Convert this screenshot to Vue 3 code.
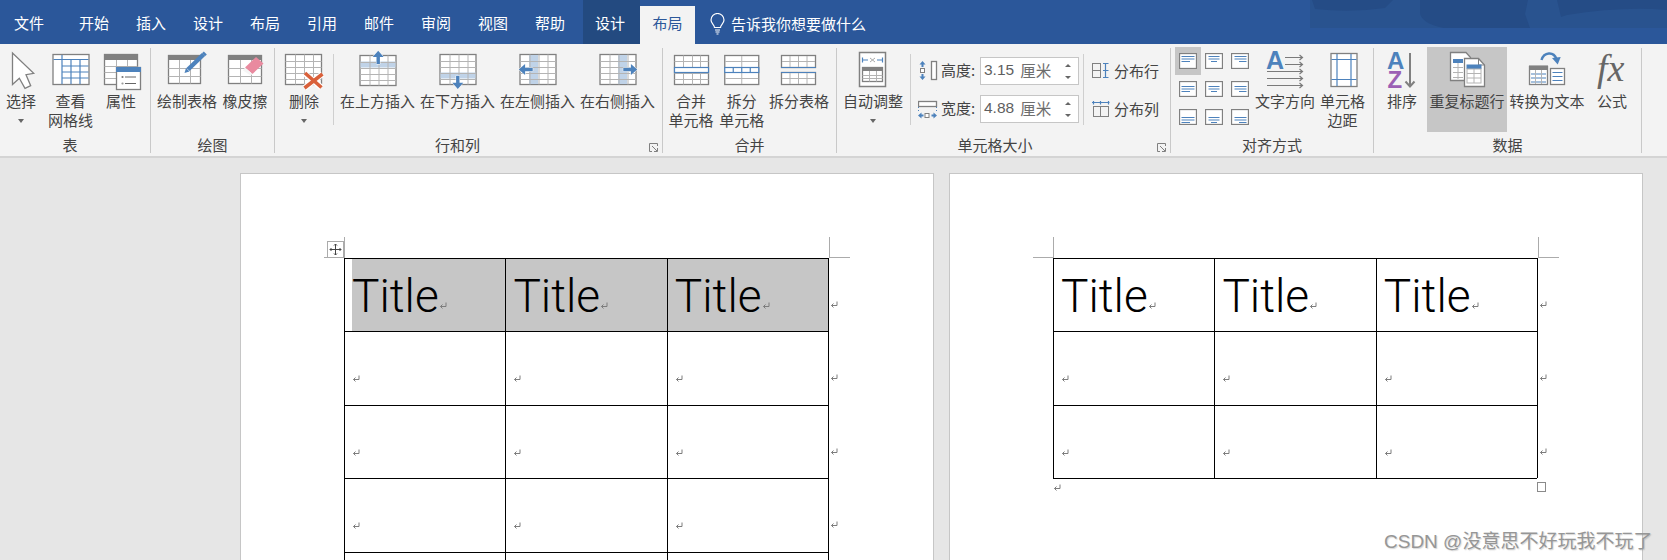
<template>
  <div class="word">
    <header class="titlebar">
      <svg class="clouds" viewBox="1310 0 357 28" width="357" height="28">
        <rect x="1310" y="0" width="357" height="28" fill="#29538f" />
        <path d="M1312 0h81l-8 8q-35 5-70 1z" fill="#254c86" />
        <path d="M1420 0h108l-3 14 5 14h-86q-24-5-24-16z" fill="#254c86" />
        <path d="M1557 0h110v10q-45-4-100 5l-6 2z" fill="#254c86" />
      </svg>
      <div class="tab file">文件</div>
      <div v-for="t in tabs" :key="t" class="tab">{{ t }}</div>
      <div class="tab context">设计</div>
      <div class="tab active">布局</div>
      <div class="tell">
        <svg width="15" height="22" viewBox="0 0 15 22" fill="none" stroke="#fff" stroke-width="1.2">
          <path d="M4.5 14.5c0-2.5-3.5-4-3.5-7.5a6.5 6.5 0 0 1 13 0c0 3.500-3.500 5-3.500 7.500z" />
          <path d="M5 17h5M5.500 19h4M6.500 21h2" />
        </svg>
        <span>告诉我你想要做什么</span>
      </div>
    </header>

    <nav class="ribbon">
      <section class="group" style="width: 151px">
        <div class="body">
          <div class="btn" style="width: 42px">
            <svg class="ico" viewBox="1 47 40 46">
              <path class="o" d="M12.500 53V84.500L19.300 78.300 25 88.300 30.700 85.700 26 74.700 33.700 73.300z" />
            </svg>
            <span>选择</span><i class="caret"></i>
          </div>
          <div class="btn" style="width: 57px">
            <svg class="ico" viewBox="50.500 47 40 46">
              <rect class="o" x="52.500" y="54.500" width="36" height="30" />
              <path class="b" d="M53 59.500H88M61.500 55V84M70.500 60V84M79.500 60V84M62 66H88M62 72H88M62 78H88" />
            </svg>
            <span>查看</span><span>网格线</span>
          </div>
          <div class="btn" style="width: 44px">
            <svg class="ico" viewBox="101 47 40 46">
              <rect class="o" x="104.500" y="54.500" width="33" height="30" />
              <path class="g" :d="grid(104.500, 60, 33, 24.500, 3, 4)" />
              <rect x="104" y="54" width="34" height="6" fill="#808080" />
              <rect class="o" x="116.500" y="67.500" width="24" height="22" />
              <rect x="116" y="67" width="25" height="5" fill="#4d82bc" />
              <path d="M125 77H136M125 83.500H136" stroke="#666" fill="none" />
              <circle cx="122.500" cy="77" r="1.100" fill="#777" /><circle cx="122.500" cy="83.500" r="1.100" fill="#999" />
            </svg>
            <span>属性</span>
          </div>
        </div>
        <h4 style="padding-right: 10px">表</h4>
      </section>

      <section class="group" style="width: 124px">
        <div class="body">
          <div class="btn" style="width: 72px">
            <svg class="ico" viewBox="167 47 40 46">
              <rect class="o" x="168.500" y="55.500" width="32" height="28" />
              <path class="g" :d="grid(168.500, 60, 32, 23.500, 3, 3)" />
              <rect x="168" y="55" width="33" height="5" fill="#808080" />
              <path d="M188 69.500L203.500 54.500" stroke="#4d82bc" stroke-width="4.500" fill="none" />
              <path d="M184.500 73l1.500-5 3.500 3.500z" fill="#4d82bc" />
              <path d="M203.800 51.500l3 3-1.800 1.800-3-3z" fill="#4d82bc" />
            </svg>
            <span>绘制表格</span>
          </div>
          <div class="btn" style="width: 44px">
            <svg class="ico" viewBox="225 47 40 46">
              <rect class="o" x="228.500" y="55.500" width="33" height="28" />
              <path class="g" :d="grid(228.500, 60, 33, 23.500, 3, 3)" />
              <rect x="228" y="55" width="34" height="5" fill="#808080" />
              <path d="M245 67.500L256 57l7.500 6.500-11 10.500z" fill="#e98a9f" />
              <path d="M245 67.500l7.500 6.500-2 1.500-7.500-5z" fill="#f5f5f5" />
            </svg>
            <span>橡皮擦</span>
          </div>
        </div>
        <h4>绘图</h4>
      </section>

      <section class="group" style="width: 388px">
        <div class="body">
          <div class="btn" style="width: 58px">
            <svg class="ico" viewBox="284 47 40 46">
              <rect class="o" x="285.500" y="54.500" width="36" height="30" />
              <path class="g" :d="grid(285.500, 54.500, 36, 30, 4, 5)" />
              <path d="M305 73.500L321.500 87.500M304.500 88L322.500 74" stroke="#fff" stroke-width="6" fill="none" />
              <path d="M305 73L321.500 87.500M304.500 88L322.500 74" stroke="#d9603a" stroke-width="3.600" fill="none" />
            </svg>
            <span>删除</span><i class="caret"></i>
          </div>
          <i class="vsep"></i>
          <div class="btn wide" style="margin-left: 3.500px">
            <svg class="ico" viewBox="357.500 47 40 46">
              <rect class="o" x="359.500" y="55.500" width="36" height="30" />
              <rect x="360" y="61.500" width="35" height="6" fill="#c0d3e8" />
              <path class="g" :d="grid(359.500, 55.500, 36, 30, 4, 5)" />
              <path class="arrow" d="M377.700 50.700l5.500 6.300h-3.800v7h-3.400v-7H372.200z" />
            </svg>
            <span>在上方插入</span>
          </div>
          <div class="btn wide">
            <svg class="ico" viewBox="437.500 47 40 46">
              <rect class="o" x="439.500" y="54.500" width="36" height="30" />
              <rect x="440" y="72.500" width="35" height="6" fill="#c0d3e8" />
              <path class="g" :d="grid(439.500, 54.500, 36, 30, 4, 5)" />
              <path class="arrow" d="M457.300 89l-5.500-6.300h3.800v-7h3.400v7h3.800z" />
            </svg>
            <span>在下方插入</span>
          </div>
          <div class="btn wide">
            <svg class="ico" viewBox="517.500 47 40 46">
              <rect class="o" x="519.500" y="54.500" width="36" height="30" />
              <rect x="528.500" y="55" width="9" height="29" fill="#c0d3e8" />
              <path class="g" :d="grid(519.500, 54.500, 36, 30, 4, 5)" />
              <path class="arrow" d="M518.300 69.500l6.300-5.500v3.800h7.600v3.400h-7.600v3.800z" />
            </svg>
            <span>在左侧插入</span>
          </div>
          <div class="btn wide">
            <svg class="ico" viewBox="597.500 47 40 46">
              <rect class="o" x="599.500" y="54.500" width="36" height="30" />
              <rect x="617.500" y="55" width="9" height="29" fill="#c0d3e8" />
              <path class="g" :d="grid(599.500, 54.500, 36, 30, 4, 5)" />
              <path class="arrow" d="M636.700 69.500l-6.300-5.500v3.800h-7.600v3.400h7.600v3.800z" />
            </svg>
            <span>在右侧插入</span>
          </div>
        </div>
        <h4 style="padding-right: 22px">行和列</h4>
        <svg class="launcher" width="9" height="9" viewBox="0 0 9 9" fill="none" stroke="#808080">
          <path d="M8.500 3V.5H.5v8H3M3 3l5 5M8.500 5v3.500H5" />
        </svg>
      </section>

      <section class="group" style="width: 174px">
        <div class="body">
          <div class="btn" style="width: 56px">
            <svg class="ico" viewBox="671 47 40 46">
              <rect class="o" x="674.500" y="55.500" width="34" height="29" />
              <path class="g" :d="grid(674.500, 55.500, 34, 29, 4, 5)" />
              <rect x="674.500" y="67.500" width="34" height="5" fill="#fff" stroke="#4d82bc" stroke-width="1.200" />
            </svg>
            <span>合并</span><span>单元格</span>
          </div>
          <div class="btn" style="width: 45.500px">
            <svg class="ico" viewBox="721.750 47 40 46">
              <rect class="o" x="724.500" y="55.500" width="34" height="29" />
              <path class="g" d="M741.500 56V67M741.500 73V84M725 61.500H758M725 78.500H758" />
              <rect x="724.500" y="67.500" width="34" height="5" fill="#fff" stroke="#4d82bc" stroke-width="1.200" />
              <path class="b" d="M733 68V72M741.500 68V72M750 68V72" />
            </svg>
            <span>拆分</span><span>单元格</span>
          </div>
          <div class="btn" style="width: 69px">
            <svg class="ico" viewBox="779 47 40 46">
              <rect class="o" x="781.500" y="55.500" width="34" height="12" />
              <rect class="o" x="781.500" y="72.500" width="34" height="12" />
              <path class="g" d="M790 56V67M798.500 56V67M807 56V67M782 61.500H815M790 73V84M798.500 73V84M807 73V84M782 78.500H815" />
              <path class="b" d="M781 67.500H816M781 72.500H816" />
            </svg>
            <span>拆分表格</span>
          </div>
        </div>
        <h4>合并</h4>
      </section>

      <section class="group" style="width: 334px">
        <div class="body">
          <div class="btn" style="width: 72px">
            <svg class="ico" viewBox="853 47 40 46">
              <rect x="859.500" y="52.500" width="26" height="34" fill="#fff" stroke="#808080" stroke-width="1.500" />
              <path class="b" d="M862.500 57.500V62.500M882.500 57.500V62.500M863 60H868M877 60H882" />
              <path d="M870 58l5 4M875 58l-5 4" stroke="#aaa" fill="none" />
              <rect class="o" x="862.500" y="67.500" width="20" height="14" />
              <path class="g" :d="grid(862.500, 71, 20, 10.500, 3, 3)" />
              <rect x="862" y="67" width="21" height="4" fill="#808080" />
            </svg>
            <span>自动调整</span><i class="caret"></i>
          </div>
          <i class="vsep" style="margin-left: 1px"></i>
          <div class="sizes">
            <div class="size-row">
              <svg width="20" height="22" viewBox="918 60 20 22">
                <rect class="o" x="931.500" y="61.500" width="5" height="18" />
                <rect x="920.500" y="68.500" width="4" height="4" fill="#fff" stroke="#808080" />
                <path d="M922.500 61l-3 3.500h2V67h2v-2.500h2zM922.500 80l-3-3.500h2V74h2v2.500h2z" fill="#4d82bc" />
              </svg>
              <label>高度:</label>
              <div class="spin">
                <span>3.15</span><em>厘米</em>
                <div class="spin-btns"><i class="up"></i><i class="down"></i></div>
              </div>
            </div>
            <div class="size-row">
              <svg width="20" height="22" viewBox="918 97 20 22">
                <rect class="o" x="918.500" y="100.500" width="18" height="5" />
                <path d="M918.500 106V112M936.500 106V112" stroke="#4d82bc" stroke-dasharray="1 2" fill="none" />
                <rect x="925" y="112.500" width="4" height="4" fill="#fff" stroke="#808080" />
                <path d="M918 114.500l3.500-3v2h2v2h-2v2zM937 114.500l-3.500-3v2h-2v2h2v2z" fill="#4d82bc" />
              </svg>
              <label>宽度:</label>
              <div class="spin">
                <span>4.88</span><em>厘米</em>
                <div class="spin-btns"><i class="up"></i><i class="down"></i></div>
              </div>
            </div>
          </div>
          <i class="vsep"></i>
          <div class="dist">
            <div class="dist-row">
              <svg width="18" height="18" viewBox="1092 62 18 18">
                <rect x="1092.500" y="63.500" width="8" height="14" fill="none" stroke="#808080" />
                <path d="M1092.500 70.500H1100.500" stroke="#808080" />
                <path class="b" d="M1105.500 63.500V77.500M1103 63.500H1108.500M1103 70.500H1108.500M1103 77.500H1108.500" />
              </svg>
              <span>分布行</span>
            </div>
            <div class="dist-row">
              <svg width="18" height="18" viewBox="1092 99 18 18">
                <rect x="1093.500" y="105.500" width="15" height="10" fill="none" stroke="#808080" />
                <path d="M1100.500 105.500V115.500" stroke="#808080" />
                <path class="b" d="M1092 101.500H1109.500M1093.500 100V103.500M1100.500 100V103.500M1108.500 100V103.500" />
              </svg>
              <span>分布列</span>
            </div>
          </div>
        </div>
        <h4 style="padding-right: 17px">单元格大小</h4>
        <svg class="launcher" width="9" height="9" viewBox="0 0 9 9" fill="none" stroke="#808080">
          <path d="M8.500 3V.5H.5v8H3M3 3l5 5M8.500 5v3.500H5" />
        </svg>
      </section>

      <section class="group" style="width: 203px">
        <div class="body">
          <div class="aligns">
            <div v-for="(a, i) in aligns" :key="i" class="align" :class="{ on: i === 0 }">
              <svg width="18" height="16" viewBox="0 0 18 16">
                <rect class="o" x=".5" y=".5" width="17" height="15" />
                <path class="b" :d="a" />
              </svg>
            </div>
          </div>
          <div class="btn" style="width: 64px">
            <svg class="ico" viewBox="1265 47 40 46">
              <text x="1266" y="69" class="letter" fill="#4d82bc">A</text>
              <path class="ar" d="M1285 57.500H1302M1285 64.500H1302M1267 71.500H1302M1267 78.500H1302M1267 85.500H1302" />
              <path class="ar" d="M1299.500 55l3 2.500-3 2.500M1299.500 62l3 2.500-3 2.500M1299.500 69l3 2.500-3 2.500M1299.500 76l3 2.500-3 2.500M1299.500 83l3 2.500-3 2.500" />
            </svg>
            <span>文字方向</span>
          </div>
          <div class="btn" style="width: 51px">
            <svg class="ico" viewBox="1322.500 47 40 46">
              <rect class="o" x="1330.500" y="53.500" width="26" height="33" />
              <path class="b" d="M1336.500 54V86M1350.500 54V86M1331 59.500H1356M1331 79.500H1356" />
            </svg>
            <span>单元格</span><span>边距</span>
          </div>
        </div>
        <h4>对齐方式</h4>
      </section>

      <section class="group" style="width: 268px">
        <div class="body">
          <div class="btn" style="width: 50px; margin-left: 3px">
            <svg class="ico" viewBox="1382 47 40 46">
              <text x="1387" y="69" class="letter small" fill="#4d82bc">A</text>
              <text x="1387.500" y="87.500" class="letter small" fill="#9b5fb5">Z</text>
              <path d="M1410 53V86M1405.500 81.500l4.500 5 4.500-5" stroke="#808080" stroke-width="2" fill="none" />
            </svg>
            <span>排序</span>
          </div>
          <div class="btn on" style="width: 80px">
            <svg class="ico" viewBox="1447 47 40 46">
              <path class="o" d="M1450.500 52.500H1466l4.500 5V80.500H1450.500z" />
              <rect x="1453" y="59" width="10" height="4" fill="#4d82bc" />
              <path class="g" d="M1453 67.500H1463M1453 72.500H1463M1453 77.500H1463M1458 63V79" />
              <path class="o" d="M1464.500 58.500H1478.500L1484.500 65V86.500H1464.500z" />
              <path d="M1478.500 58.500V65H1484.500" fill="none" stroke="#808080" />
              <rect x="1466.500" y="64.500" width="15" height="4.500" fill="#4d82bc" />
              <rect class="g" x="1467" y="69" width="14" height="14" />
              <path class="g" d="M1474 69V83M1467 73.500H1481M1467 78H1481" />
            </svg>
            <span>重复标题行</span>
          </div>
          <div class="btn" style="width: 80px">
            <svg class="ico" viewBox="1527 47 40 46">
              <rect class="o" x="1529.500" y="66.500" width="18" height="18" />
              <rect x="1529" y="65.500" width="19" height="4.500" fill="#808080" />
              <path class="b" d="M1531 74H1546M1531 78H1546M1531 82H1546" />
              <path class="g" d="M1535.500 70V84M1541.500 70V84" />
              <rect class="o" x="1550.500" y="68.500" width="14" height="16" />
              <path class="b" d="M1552.500 72.500H1562.500M1552.500 76.500H1562.500M1552.500 80.500H1562.500" />
              <path d="M1541.500 60c2.500-8 12-9 15-1" stroke="#4d82bc" stroke-width="2.400" fill="none" />
              <path d="M1552 58l5.700 6.500 3-7.500z" fill="#4d82bc" />
            </svg>
            <span>转换为文本</span>
          </div>
          <div class="btn" style="width: 50px">
            <svg class="ico" viewBox="1592 47 40 46">
              <text x="1597" y="80.500" class="fx">fx</text>
            </svg>
            <span>公式</span>
          </div>
        </div>
        <h4>数据</h4>
      </section>
    </nav>

    <main class="doc">
      <div v-for="page in pages" :key="page.id" class="page">
        <div class="table-wrap">
          <i class="crop left"></i>
          <i class="crop right"></i>
          <div v-if="page.selected" class="move">
            <svg width="13" height="13" viewBox="0 0 13 13" fill="none" stroke="#444">
              <path d="M6.500 1V12M1 6.500H12M5 2.500L6.500 1 8 2.500M5 10.500L6.500 12 8 10.500M2.500 5L1 6.500 2.500 8M10.500 5L12 6.500 10.500 8" />
            </svg>
          </div>
          <div class="table">
            <template v-for="(row, r) in page.rows" :key="r">
              <div
                v-for="(cell, c) in row"
                :key="c"
                class="cell"
                :class="{ sel: page.selected && r === 0, first: c === 0 }"
              >{{ cell }}<svg class="mark"><use href="#ret" /></svg></div>
              <div class="row-end"><svg class="mark"><use href="#ret" /></svg></div>
            </template>
            <div v-if="!page.selected" class="foot"></div>
          </div>
          <template v-if="!page.selected">
            <i class="resize"></i>
            <div class="after"><svg class="mark"><use href="#ret" /></svg></div>
          </template>
        </div>
      </div>
    </main>

    <div class="watermark">CSDN @没意思不好玩我不玩了</div>

    <svg width="0" height="0" style="position: absolute">
      <symbol id="ret" viewBox="0 0 8 8">
        <path d="M7 .5V4.500H1.500M3.500 2.500L1.500 4.500 3.500 6.500" fill="none" stroke="#7c7c7c" />
      </symbol>
    </svg>
  </div>
</template>

<script setup>
const tabs = ['开始', '插入', '设计', '布局', '引用', '邮件', '审阅', '视图', '帮助']

// inner lines of a small table icon
const grid = (x, y, w, h, cols, rows) => {
  let d = ''
  for (let i = 1; i < cols; i++) {
    const px = Math.round(x + (w * i) / cols) + 0.5
    d += `M${px} ${y}V${y + h}`
  }
  for (let i = 1; i < rows; i++) {
    const py = Math.round(y + (h * i) / rows) + 0.5
    d += `M${x} ${py}H${x + w}`
  }
  return d
}

// text lines inside the nine alignment buttons
const aligns = []
for (const top of [3.5, 5.5, 8.5]) {
  for (const col of [0, 1, 2]) {
    const long = col === 0 ? [2.5, 15.5] : col === 1 ? [3.5, 14.5] : [3.5, 15.5]
    const short = col === 0 ? [2.5, 11] : col === 1 ? [6, 12] : [8, 15.5]
    aligns.push(
      `M${long[0]} ${top}H${long[1]}M${long[0]} ${top + 2.5}H${long[1]}M${short[0]} ${top + 5}H${short[1]}`
    )
  }
}

const title = ['Title', 'Title', 'Title']
const empty = ['', '', '']
const pages = [
  { id: 1, selected: true, rows: [title, empty, empty, empty, empty] },
  { id: 2, selected: false, rows: [title, empty, empty] }
]
</script>

<style>
html,
body {
  margin: 0;
  overflow: hidden;
}
</style>

<style scoped>
.word {
  position: relative;
  width: 1667px;
  height: 560px;
  overflow: hidden;
  background: #e6e6e6;
  font-family: "Noto Sans CJK SC", "Liberation Sans", sans-serif;
  color: #444;
}

.titlebar {
  position: relative;
  display: flex;
  align-items: flex-end;
  height: 44px;
  background: #2b579a;
}

.clouds {
  position: absolute;
  top: 0;
  left: 1310px;
}

.tab {
  position: relative;
  display: flex;
  align-items: center;
  justify-content: center;
  box-sizing: border-box;
  width: 57px;
  height: 38px;
  padding-bottom: 5px;
  font-size: 15px;
  color: #fff;
}

.tab.file {
  width: 65.5px;
  padding-left: 14px;
  padding-right: 21.5px;
}

.tab.context {
  height: 44px;
  padding-bottom: 0;
  margin-left: 4.5px;
  padding-right: 3px;
  background: #234a80;
}

.tab.active {
  width: 55px;
  background: #f3f3f3;
  color: #2b579a;
}

.tell {
  position: relative;
  display: flex;
  align-items: center;
  gap: 6px;
  height: 44px;
  margin-left: 15px;
  padding-top: 3px;
  box-sizing: border-box;
  font-size: 15px;
  color: #fff;
}

.ribbon {
  display: flex;
  box-sizing: border-box;
  height: 114px;
  padding-top: 4px;
  background: #f3f3f3;
  border-bottom: 2px solid #d4d4d4;
}

.group {
  position: relative;
  box-sizing: border-box;
  height: 105px;
  border-right: 1px solid #c9c9c9;
}

.group h4 {
  margin: -1px 0 0;
  font-size: 15px;
  font-weight: 400;
  line-height: 15px;
  text-align: center;
}

.body {
  display: flex;
  height: 90px;
}

.btn {
  display: flex;
  flex-direction: column;
  align-items: center;
  flex: none;
  height: 85px;
  margin-top: -1px;
  font-size: 15px;
  line-height: 19px;
  white-space: nowrap;
}

.btn.wide {
  width: 80px;
}

.btn.on {
  background: #c6c6c6;
}

.ico {
  flex: none;
  width: 40px;
  height: 46px;
  margin-bottom: -2px;
  overflow: visible;
}

.caret {
  width: 0;
  height: 0;
  margin-top: 9px;
  border: 3px solid transparent;
  border-top: 4px solid #666;
  border-bottom: 0;
}

.vsep {
  flex: none;
  width: 1px;
  height: 71px;
  margin-top: 6px;
  background: #cfcfcf;
}

.launcher {
  position: absolute;
  right: 4px;
  bottom: 1px;
}

.o {
  fill: #fff;
  stroke: #808080;
  stroke-width: 1.3;
}

.g {
  fill: none;
  stroke: #b4b4b4;
  stroke-width: 1;
}

.b {
  fill: none;
  stroke: #4d82bc;
  stroke-width: 1.2;
}

.ar {
  fill: none;
  stroke: #7a7a7a;
  stroke-width: 1.2;
}

.arrow {
  fill: #4d82bc;
  stroke: #fff;
  stroke-width: 1;
  paint-order: stroke;
}

.letter {
  font-family: "Liberation Sans", sans-serif;
  font-size: 25px;
  font-weight: 700;
}

.letter.small {
  font-size: 24px;
}

.fx {
  font-family: "Liberation Serif", serif;
  font-size: 38px;
  font-style: italic;
  fill: #666;
}

.sizes {
  flex: none;
  box-sizing: border-box;
  width: 172px;
  padding: 9px 0 0 7px;
}

.size-row {
  display: flex;
  align-items: center;
  height: 28px;
  margin-bottom: 10px;
  font-size: 15px;
}

.size-row label {
  width: 35px;
  margin: -4px 0 0 3px;
  white-space: nowrap;
}

.spin {
  display: flex;
  align-items: center;
  box-sizing: border-box;
  width: 99px;
  height: 28px;
  margin-left: 4px;
  padding-left: 3px;
  background: #fff;
  border: 1px solid #c6c6c6;
  font-family: "Liberation Sans", "Noto Sans CJK SC", sans-serif;
  font-size: 15.5px;
  color: #5f5f5f;
}

.spin span,
.spin em {
  margin-top: -2px;
}

.spin em {
  margin-left: 6px;
  font-style: normal;
  color: #6e6e6e;
}

.spin-btns {
  display: flex;
  flex-direction: column;
  gap: 9px;
  margin-left: auto;
  margin-right: 7px;
}

.spin-btns i {
  width: 0;
  height: 0;
  border: 3px solid transparent;
}

.spin-btns .up {
  border-top: 0;
  border-bottom: 3px solid #666;
}

.spin-btns .down {
  border-bottom: 0;
  border-top: 3px solid #666;
}

.dist {
  flex: none;
  padding: 11px 0 0 8px;
}

.dist-row {
  display: flex;
  align-items: center;
  gap: 4px;
  height: 24px;
  margin-bottom: 14px;
  font-size: 15px;
}

.dist-row span {
  margin-top: -2px;
}

.aligns {
  display: grid;
  flex: none;
  grid-template-columns: repeat(3, 26px);
  grid-auto-rows: 28px;
  height: 84px;
  margin: -1px 0 0 4px;
}

.align {
  display: flex;
  align-items: center;
  justify-content: center;
}

.align.on {
  background: #c6c6c6;
}

.doc {
  display: flex;
  gap: 15px;
  padding: 15px 0 0 240px;
}

.page {
  flex: none;
  box-sizing: border-box;
  width: 694px;
  height: 500px;
  padding: 84px 0 0 103px;
  background: #fff;
  border: 1px solid #c6c6c6;
}

.table-wrap {
  position: relative;
  width: 504.2px;
}

.table {
  display: grid;
  grid-template-columns: repeat(3, 161.4px) 20px;
  grid-auto-rows: 73.4px;
  font-family: Roboto, "Liberation Sans", sans-serif;
  font-size: 46px;
  font-weight: 300;
  line-height: 73px;
  color: #000;
}

.cell {
  box-sizing: border-box;
  padding: 1px 0 0 7px;
  border-top: 1px solid #000;
  border-left: 1px solid #000;
  white-space: nowrap;
}

.cell.sel {
  background: #c6c6c6;
}

.cell.sel.first {
  background: linear-gradient(90deg, #fff 7px, #c6c6c6 7px);
}

.row-end {
  border-left: 1px solid #000;
  padding: 1px 0 0 1px;
}

.foot {
  grid-column: 1 / 4;
  height: 0;
  border-top: 1px solid #000;
}

.mark {
  display: inline-block;
  width: 8px;
  height: 8px;
  margin-left: 2px;
  vertical-align: 2px;
}

.cell .mark:first-child {
  margin-left: 0;
}

.row-end .mark {
  margin-left: 0;
}

.after {
  margin-top: -68px;
  line-height: 8px;
}

.after .mark {
  margin-left: 0;
  vertical-align: top;
}

.crop {
  position: absolute;
  top: -21px;
  width: 20px;
  height: 20px;
}

.crop.left {
  left: -20px;
  border-right: 1px solid #ababab;
  border-bottom: 1px solid #ababab;
}

.crop.right {
  left: 485px;
  border-left: 1px solid #ababab;
  border-bottom: 1px solid #ababab;
}

.move {
  position: absolute;
  top: -17px;
  left: -17px;
  display: flex;
  align-items: center;
  justify-content: center;
  box-sizing: border-box;
  width: 17px;
  height: 17px;
  background: #fff;
  border: 1px solid #ababab;
}

.resize {
  position: absolute;
  bottom: 0;
  left: 484px;
  width: 9px;
  height: 10px;
  box-sizing: border-box;
  border: 1px solid #8a8a8a;
  background: #fff;
}

.watermark {
  position: absolute;
  top: 530px;
  left: 1384px;
  font-family: "Liberation Sans", "Noto Sans CJK SC", sans-serif;
  font-size: 19px;
  line-height: 24px;
  color: #969696;
  white-space: nowrap;
  text-shadow: 1px 1px 1px rgba(120, 120, 120, 0.3);
}
</style>
